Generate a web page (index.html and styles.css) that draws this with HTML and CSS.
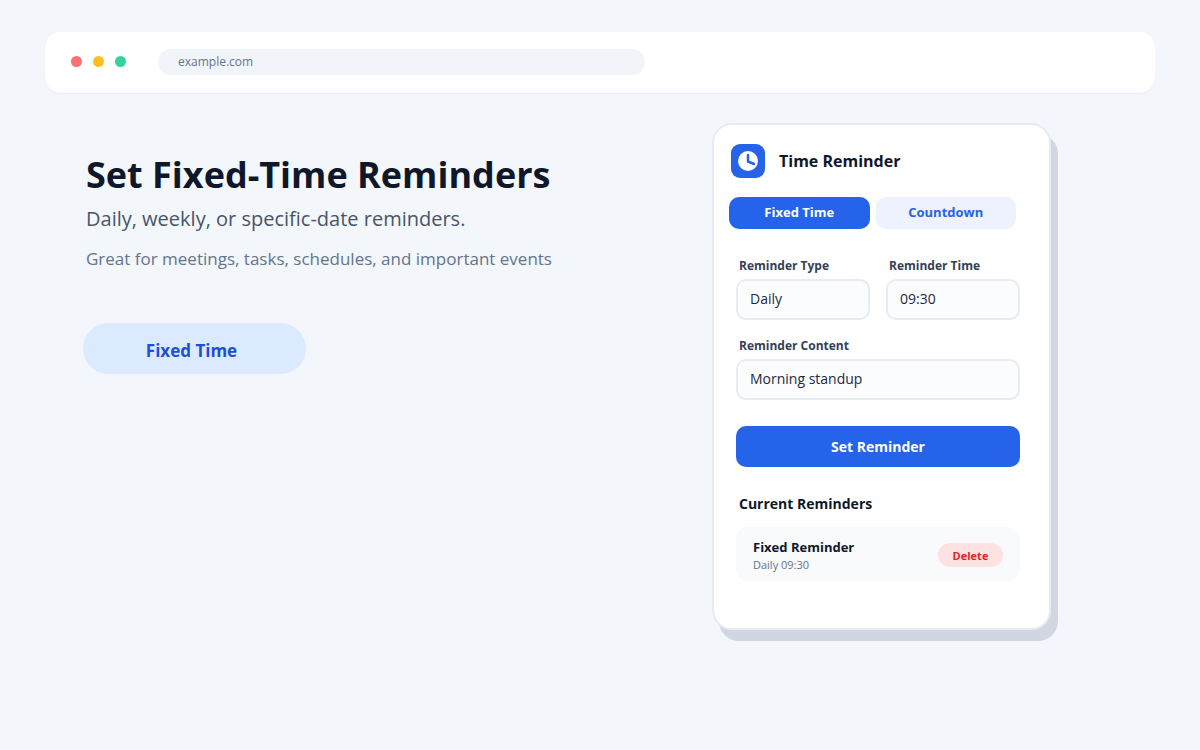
FILE: index.html
```html
<!DOCTYPE html>
<html lang="en">
<head>
  <meta charset="UTF-8">
  <meta name="viewport" content="width=device-width, initial-scale=1.0">
  <title>Time Reminder</title>
  <link rel="stylesheet" href="styles.css">
</head>
<body>

  <!-- Browser Bar -->
  <header class="browser-bar">
    <div class="dots">
      <span class="dot red"></span>
      <span class="dot yellow"></span>
      <span class="dot green"></span>
    </div>
    <div class="address">example.com</div>
  </header>

  <main class="content">
    <!-- Intro Section -->
    <section class="intro">
      <h1>Set Fixed-Time Reminders</h1>
      <p class="subtitle">Daily, weekly, or specific-date reminders.</p>
      <p class="note">Great for meetings, tasks, schedules, and important events</p>
      <button type="button" class="pill">Fixed Time</button>
    </section>

    <!-- Reminder Card -->
    <section class="card">
      <div class="card-header">
        <svg class="logo" viewBox="0 0 34 34" aria-hidden="true">
          <rect width="34" height="34" rx="9" fill="#2563eb"/>
          <circle cx="17" cy="17" r="10" fill="#fff"/>
          <path d="M17 11v6.500l6 2.500" fill="none" stroke="#2563eb" stroke-width="2.500" stroke-linecap="round" stroke-linejoin="round"/>
        </svg>
        <h2>Time Reminder</h2>
      </div>

      <div class="tabs">
        <button type="button" class="tab active">Fixed Time</button>
        <button type="button" class="tab">Countdown</button>
      </div>

      <form class="reminder-form">
        <div class="field-row">
          <div class="field">
            <label for="type">Reminder Type</label>
            <select id="type">
              <option>Daily</option>
              <option>Weekly</option>
              <option>Specific date</option>
            </select>
          </div>
          <div class="field">
            <label for="time">Reminder Time</label>
            <input type="text" id="time" value="09:30">
          </div>
        </div>
        <div class="field">
          <label for="message">Reminder Content</label>
          <input type="text" id="message" value="Morning standup">
        </div>
        <button type="button" class="submit">Set Reminder</button>
      </form>

      <div class="reminders">
        <h3>Current Reminders</h3>
        <div class="reminder">
          <div class="reminder-text">
            <h4>Fixed Reminder</h4>
            <p>Daily 09:30</p>
          </div>
          <button type="button" class="delete">Delete</button>
        </div>
      </div>
    </section>
  </main>

</body>
</html>
```
FILE: styles.css
```css
/* Global Styles */
* {
  box-sizing: border-box;
}

body {
  margin: 0;
  padding: 32px 45px;
  background-color: #f3f6fb;
  color: #0f172a;
  font-family: "Segoe UI", "Open Sans", "Noto Sans", sans-serif;
}

h1, h2, h3, h4, p {
  margin: 0;
}

button, input, select {
  font-family: inherit;
}

button {
  border: none;
  padding: 0;
  font-weight: 700;
  cursor: pointer;
}

/* Browser Bar */
.browser-bar {
  display: flex;
  align-items: center;
  gap: 32px;
  height: 61px;
  padding: 0 26px 2px;
  background-color: #fff;
  border-radius: 16px;
  box-shadow: 0 1px 1px #e9edf4;
}

.dots {
  display: flex;
  gap: 11px;
}

.dot {
  width: 11px;
  height: 11px;
  border-radius: 50%;
}

.red {
  background-color: #f87171;
}

.yellow {
  background-color: #fbbf24;
}

.green {
  background-color: #34d399;
}

.address {
  width: 46%;
  padding: 0 20px;
  border-radius: 13px;
  background-color: #f1f5f9;
  color: #64748b;
  font-size: 12px;
  line-height: 26px;
}

/* Main Content Area */
.content {
  display: flex;
  justify-content: space-between;
  align-items: flex-start;
  gap: 40px;
  padding: 30px 104px 0 38px;
}

.intro {
  padding-top: 24px;
}

.intro h1,
.subtitle,
.note {
  padding-left: 3px;
}

.intro h1 {
  font-size: 36px;
  line-height: 56px;
}

.subtitle {
  color: #475569;
  font-size: 20px;
  line-height: 32px;
}

.note {
  margin-top: 12px;
  color: #64748b;
  font-size: 17px;
  line-height: 24px;
}

.pill {
  width: 223px;
  height: 51px;
  margin-top: 52px;
  padding: 4px 6px 0 0;
  border-radius: 26px;
  background-color: #dbeafe;
  color: #1d4ed8;
  font-size: 17px;
}

/* Reminder Card */
.card {
  width: 339px;
  padding: 19px 29px 47px 22px;
  border: 2px solid #e7ebf3;
  border-radius: 20px;
  background-color: #fff;
  box-shadow: 7px 11px 0 #d2d6e0;
}

.card-header {
  display: flex;
  align-items: center;
  gap: 14px;
  margin-left: -5px;
}

.logo {
  width: 34px;
  height: 34px;
}

.card h2 {
  font-size: 16px;
  line-height: 24px;
}

.tabs {
  display: flex;
  gap: 6px;
  margin: 19px 4px 0 -7px;
}

.tab {
  flex: 1;
  height: 32px;
  padding-bottom: 2px;
  border-radius: 10px;
  background-color: #eef2ff;
  color: #2563eb;
  font-size: 13px;
}

.tab.active {
  background-color: #2563eb;
  color: #fff;
}

.reminder-form {
  display: flex;
  flex-direction: column;
  gap: 16px;
  margin-top: 27px;
}

.field-row {
  display: flex;
  gap: 16px;
}

.field {
  display: flex;
  flex: 1;
  flex-direction: column;
  gap: 3px;
  min-width: 0;
}

.field label {
  padding-left: 3px;
  color: #334155;
  font-size: 12px;
  font-weight: 700;
  line-height: 20px;
}

.field input,
.field select {
  width: 100%;
  height: 41px;
  padding: 0 12px 2px;
  border: 2px solid #e7ebf3;
  border-radius: 10px;
  background-color: #fbfcfe;
  color: #1e293b;
  font-size: 14px;
  appearance: none;
}

.submit {
  height: 41px;
  margin-top: 10px;
  border-radius: 10px;
  background-color: #2563eb;
  color: #fff;
  font-size: 14px;
}

/* Current Reminders */
.reminders {
  margin-top: 27px;
}

.reminders h3 {
  padding-left: 3px;
  font-size: 14px;
  line-height: 20px;
}

.reminder {
  display: flex;
  justify-content: space-between;
  align-items: center;
  margin-top: 13px;
  padding: 10px 17px 8px;
  border-radius: 12px;
  background-color: #f8fafc;
}

.reminder h4 {
  font-size: 13px;
  line-height: 20px;
}

.reminder p {
  color: #64748b;
  font-size: 11px;
  line-height: 16px;
}

.delete {
  width: 65px;
  height: 24px;
  border-radius: 12px;
  background-color: #fee2e2;
  color: #dc2626;
  font-size: 11px;
}

/* Responsive Design */
@media (max-width: 960px) {
  .content {
    flex-direction: column;
    padding: 30px 0 0;
  }
}
```
